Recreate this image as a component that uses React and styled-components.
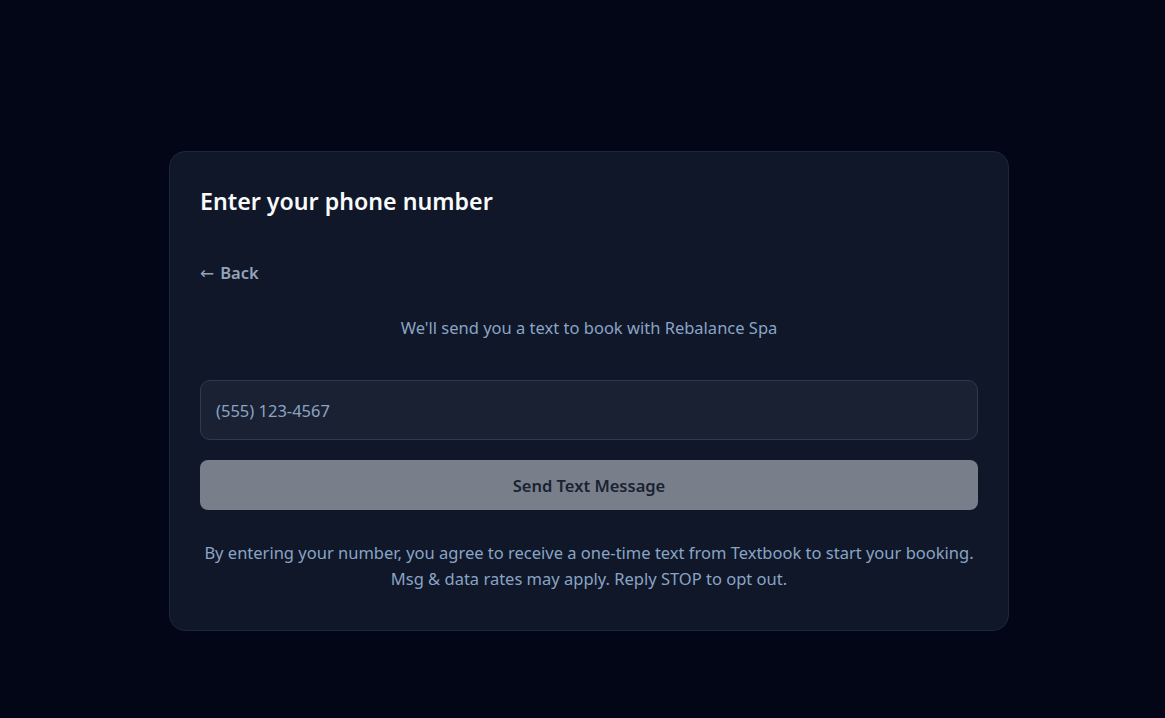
import React from "react";
import styled, { createGlobalStyle } from "styled-components";

const Global = createGlobalStyle`
  html, body { margin: 0; padding: 0; background: #020617; }
  body { font-family: "Noto Sans", "Open Sans", sans-serif; }
  * { box-sizing: border-box; }
`;

const Page = styled.div`
  min-height: 718px;
  padding: 151px 0 0 169px;
`;

const Card = styled.div`
  width: 840px;
  background: #0f1729;
  border: 1px solid #1e2738;
  border-radius: 16px;
  padding: 29px 30px 38px 30px;
  display: flex;
  flex-direction: column;
`;

const Title = styled.h2`
  margin: 0;
  font-size: 23.2px;
  font-weight: 600;
  line-height: 40px;
  color: #f8fafc;
`;

const BackLink = styled.button`
  align-self: flex-start;
  margin-top: 40px;
  padding: 0;
  border: none;
  background: none;
  font: inherit;
  font-size: 16.5px;
  font-weight: 600;
  line-height: 24px;
  color: #94a3b8;
  cursor: pointer;
  display: flex;
  align-items: center;
  gap: 6px;
`;

const Arrow = styled.span`
  font-family: "DejaVu Sans", "Liberation Sans", sans-serif;
  font-weight: 400;
  font-size: 17px;
`;

const Subtitle = styled.p`
  margin: 31px 0 0;
  text-align: center;
  font-size: 16.5px;
  line-height: 24px;
  color: #8aa4c4;
`;

const PhoneInput = styled.input`
  margin-top: 40px;
  height: 60px;
  width: 100%;
  padding: 0 15px;
  background: #1a2133;
  border: 1px solid #2f3a4d;
  border-radius: 10px;
  font: inherit;
  font-size: 16.5px;
  color: #e2e8f0;
  outline: none;
  &::placeholder { color: #8aa4c4; }
`;

const SendButton = styled.button`
  margin-top: 20px;
  height: 50px;
  width: 100%;
  border: none;
  border-radius: 8px;
  background: #787f8b;
  font: inherit;
  font-size: 16.5px;
  font-weight: 600;
  color: #1a2232;
  cursor: not-allowed;
`;

const Fine = styled.p`
  margin: 30px -10px 0;
  text-align: center;
  font-size: 16.5px;
  line-height: 26px;
  color: #8aa4c4;
`;

export default function App() {
  return (
    <>
      <Global />
      <Page>
        <Card>
          <Title>Enter your phone number</Title>
          <BackLink>
            <Arrow>←</Arrow>Back
          </BackLink>
          <Subtitle>We'll send you a text to book with Rebalance Spa</Subtitle>
          <PhoneInput placeholder="(555) 123-4567" />
          <SendButton disabled>Send Text Message</SendButton>
          <Fine>
            By entering your number, you agree to receive a one-time text from Textbook to start your booking.
            <br />
            Msg &amp; data rates may apply. Reply STOP to opt out.
          </Fine>
        </Card>
      </Page>
    </>
  );
}
